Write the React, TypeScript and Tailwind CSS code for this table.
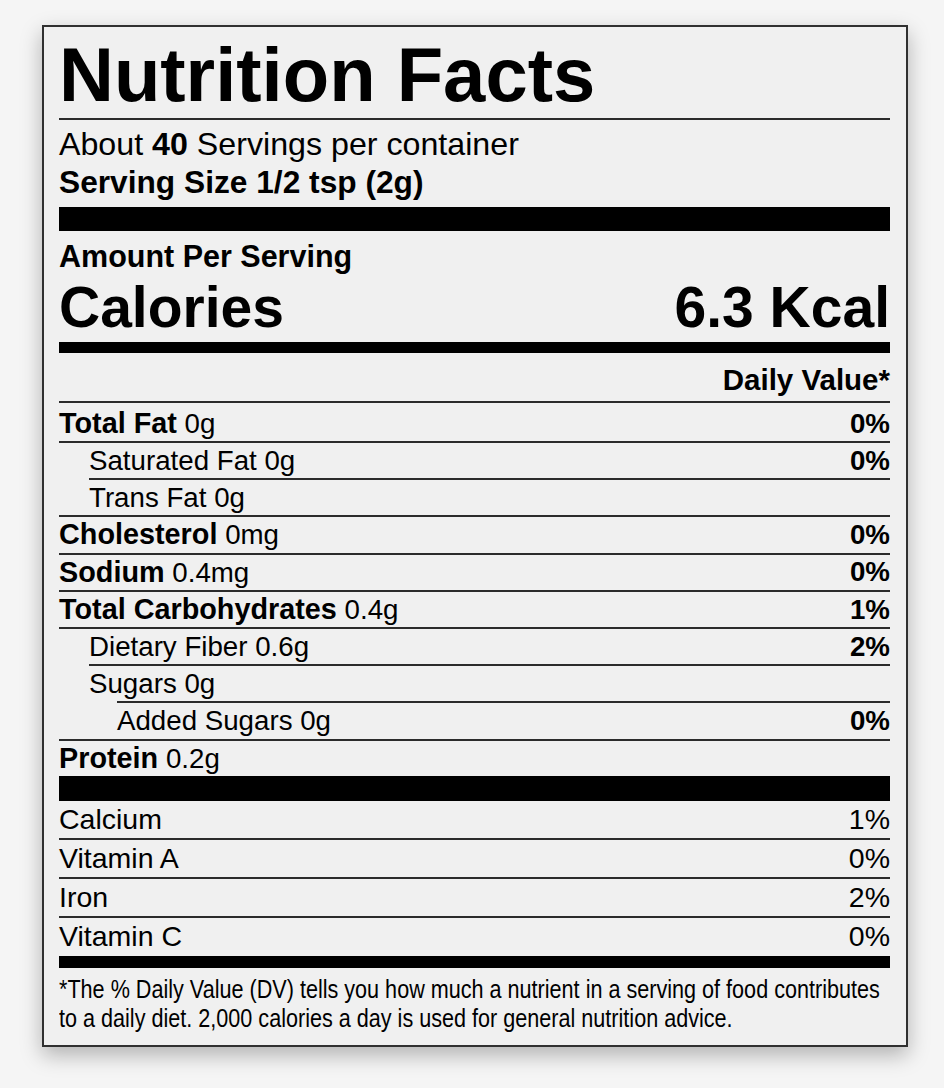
type Row = {
  label: string;
  amount: string;
  dv?: string;
  bold?: boolean;
  indent?: number;
  line?: number;
};

const rows: Row[] = [
  { label: 'Total Fat', amount: '0g', dv: '0%', bold: true, indent: 0, line: 0 },
  { label: 'Saturated Fat', amount: '0g', dv: '0%', indent: 1, line: 0 },
  { label: 'Trans Fat', amount: '0g', indent: 1, line: 1 },
  { label: 'Cholesterol', amount: '0mg', dv: '0%', bold: true, indent: 0, line: 0 },
  { label: 'Sodium', amount: '0.4mg', dv: '0%', bold: true, indent: 0, line: 0 },
  { label: 'Total Carbohydrates', amount: '0.4g', dv: '1%', bold: true, indent: 0, line: 0 },
  { label: 'Dietary Fiber', amount: '0.6g', dv: '2%', indent: 1, line: 0 },
  { label: 'Sugars', amount: '0g', indent: 1, line: 1 },
  { label: 'Added Sugars', amount: '0g', dv: '0%', indent: 2, line: 2 },
  { label: 'Protein', amount: '0.2g', bold: true, indent: 0, line: 0 },
];

const vitamins = [
  { label: 'Calcium', dv: '1%' },
  { label: 'Vitamin A', dv: '0%' },
  { label: 'Iron', dv: '2%' },
  { label: 'Vitamin C', dv: '0%' },
];

const indentClass = ['pl-0', 'pl-[30px]', 'pl-[58px]'];
const lineClass = ['ml-0', 'ml-[30px]', 'ml-[58px]'];

function NutrientRow({ row, first }: { row: Row; first: boolean }) {
  return (
    <div>
      <div className={`h-[2px] bg-[#2b2b2b] ${lineClass[row.line ?? 0]}`} />
      <div
        className={`flex items-center justify-between text-[27.7px] ${
          first ? 'h-[38px] pt-[3px]' : 'h-[35.2px]'
        } ${indentClass[row.indent ?? 0]}`}
      >
        <span>
          {row.bold ? <span className="text-[28.8px] font-bold">{row.label}</span> : row.label}{' '}
          {row.amount}
        </span>
        {row.dv && <span className="font-bold">{row.dv}</span>}
      </div>
    </div>
  );
}

export default function App() {
  return (
    <div className="min-h-[1088px] overflow-hidden bg-[#f5f5f5] pt-[25px] pl-[42px] font-[family-name:'Liberation_Sans',Arial,sans-serif] text-black">
      <div className="w-[866px] border-2 border-[#303030] bg-[#f0f0f0] pl-[15px] pr-[16px] pt-[4px] pb-[12px] shadow-[0_8px_20px_rgba(0,0,0,0.28)]">
        {/* Header */}
        <h1 className="h-[87px] text-[76px] leading-[87px] font-bold">Nutrition Facts</h1>
        <div className="h-[2px] bg-[#2b2b2b]" />
        <div className="mt-[5px] leading-[38px]">
          <p className="text-[32.2px]">
            About <span className="font-bold">40</span> Servings per container
          </p>
          <p className="text-[31.7px] font-bold">Serving Size 1/2 tsp (2g)</p>
        </div>
        <div className="mt-[6px] h-[24px] bg-black" />

        {/* Calories */}
        <p className="mt-[8px] text-[30.5px] leading-[34px] font-bold">Amount Per Serving</p>
        <div className="mt-[3px] flex h-[62px] items-center justify-between text-[57px] leading-[62px] font-bold">
          <span>Calories</span>
          <span>6.3 Kcal</span>
        </div>
        <div className="mt-[4px] h-[11px] bg-black" />

        <p className="mt-[6px] h-[42px] text-right text-[29.5px] leading-[42px] font-bold">Daily Value*</p>

        {/* Nutrients */}
        {rows.map((row, i) => (
          <NutrientRow key={row.label} row={row} first={i === 0} />
        ))}
        <div className="h-[25px] bg-black" />

        {/* Vitamins */}
        {vitamins.map((v, i) => (
          <div key={v.label}>
            {i > 0 && <div className="h-[2px] bg-[#2b2b2b]" />}
            <div className="flex h-[37px] items-center justify-between text-[28.5px] leading-[37px]">
              <span>{v.label}</span>
              <span>{v.dv}</span>
            </div>
          </div>
        ))}
        <div className="mt-[1px] h-[12px] bg-black" />

        {/* Footnote */}
        <p className="mt-[7px] w-max origin-left scale-x-[0.864] whitespace-nowrap text-[25px] leading-[29px]">
          *The % Daily Value (DV) tells you how much a nutrient in a serving of food contributes
          <br />
          to a daily diet. 2,000 calories a day is used for general nutrition advice.
        </p>
      </div>
    </div>
  );
}
